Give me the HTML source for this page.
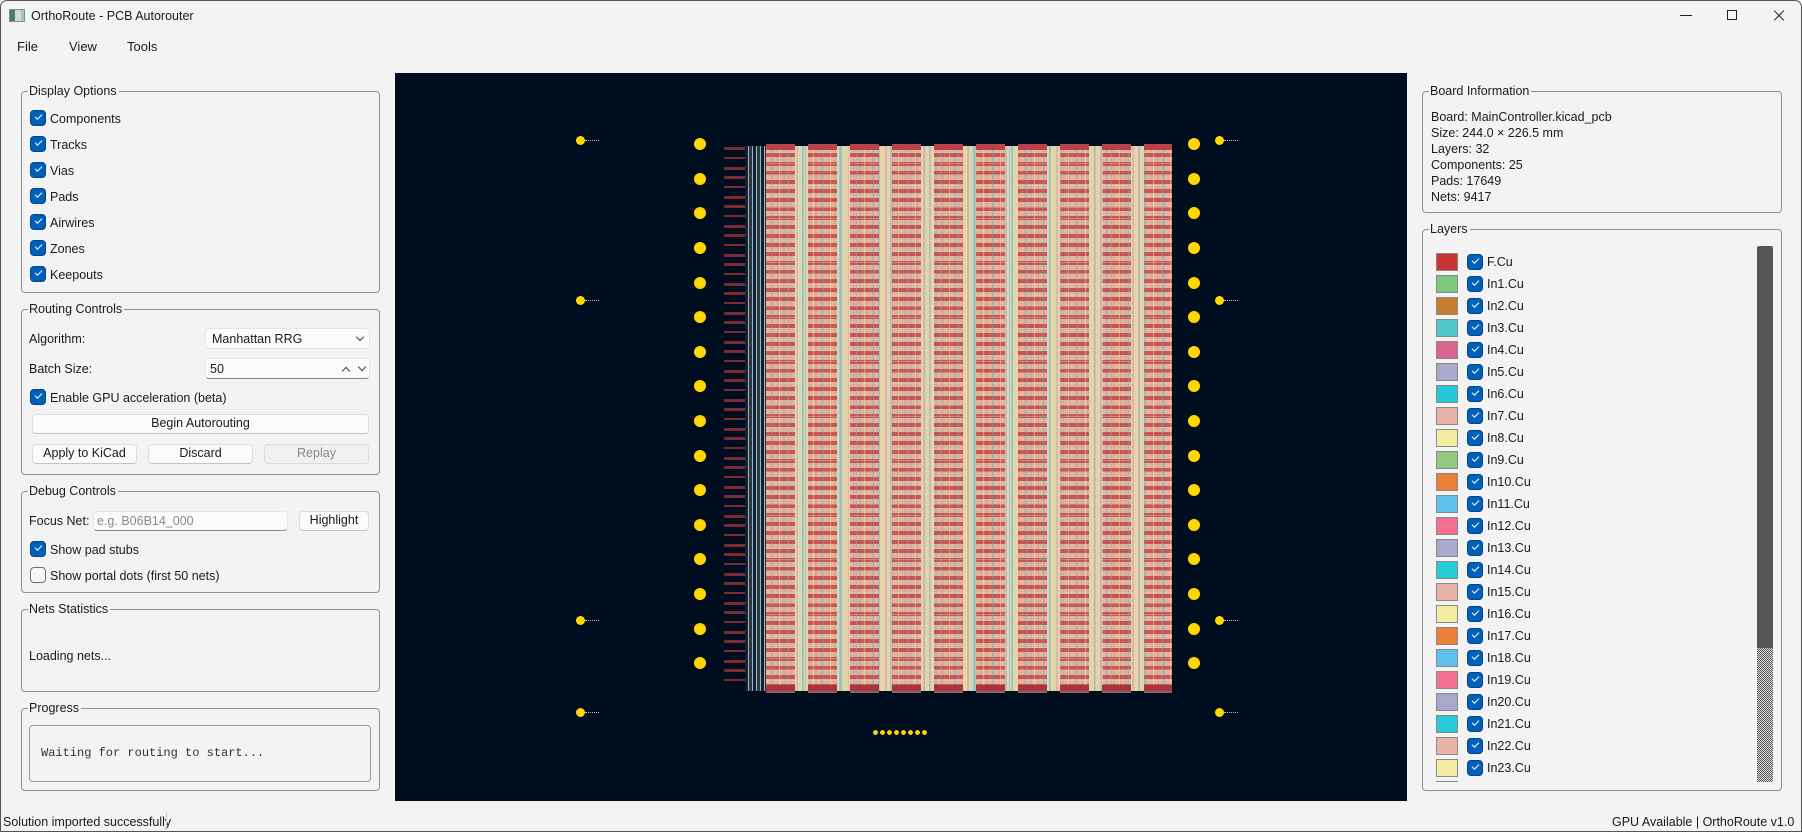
<!DOCTYPE html>
<html><head><meta charset="utf-8">
<style>
*{box-sizing:border-box;margin:0;padding:0}
body{width:1802px;height:832px;overflow:hidden;background:#f3f3f3;font-family:"Liberation Sans",sans-serif;font-size:12.5px;color:#1a1a1a;position:relative}
.a{position:absolute}
.win{position:absolute;left:0;top:0;width:1802px;height:832px;border:1px solid #555;border-radius:7px 7px 0 0}
.gb{position:absolute;border:1px solid #8f8f8f;border-radius:4px}
.gt{position:absolute;top:-9px;left:6px;background:#f3f3f3;padding:0 2px 0 1px;font-size:12.5px;line-height:16px}
.cb{position:absolute;width:16px;height:16px;border-radius:4px;background:#005fb8;border:1px solid #00468a}
.cb::after{content:"";position:absolute;left:4px;top:3px;width:6px;height:3px;border-left:1.2px solid #fff;border-bottom:1.2px solid #fff;transform:rotate(-45deg)}
.cbo{position:absolute;width:16px;height:16px;border-radius:4px;background:#f7f7f7;border:1px solid #6f6f6f}
.lbl{position:absolute;line-height:16px;white-space:nowrap}
.btn{position:absolute;background:#fbfbfb;border:1px solid #dcdcdc;border-bottom-color:#c4c4c4;border-radius:4px;text-align:center;line-height:17px}
.dot{position:absolute;border-radius:50%;background:#ffd700}
.sw{position:absolute;width:22px;height:18px;border:1px solid #8a8a8a}
</style></head><body>
<div class="win"></div>
<!-- title -->
<div class="a" style="left:9px;top:9px;width:16px;height:13px;border:1px solid #888;background:linear-gradient(90deg,#3d7e7a 0 5px,#d8d8d8 5px 11px,#9cb 11px)"></div>
<div class="lbl" style="left:31px;top:8px;font-size:12.5px">OrthoRoute - PCB Autorouter</div>
<div class="a" style="left:1680px;top:15px;width:12px;height:1px;background:#222"></div>
<div class="a" style="left:1727px;top:10px;width:10px;height:10px;border:1px solid #222"></div>
<div class="a" style="left:1772px;top:15px;width:14px;height:1px;background:#222;transform:rotate(45deg)"></div>
<div class="a" style="left:1772px;top:15px;width:14px;height:1px;background:#222;transform:rotate(-45deg)"></div>
<!-- menu -->
<div class="lbl" style="left:17px;top:39px;font-size:13px">File</div>
<div class="lbl" style="left:69px;top:39px;font-size:13px">View</div>
<div class="lbl" style="left:127px;top:39px;font-size:13px">Tools</div>

<!-- Display Options -->
<div class="gb" style="left:21px;top:91px;width:359px;height:202px"><div class="gt">Display Options</div></div>
<div class="cb" style="left:30px;top:110px"></div><div class="lbl" style="left:50px;top:111px">Components</div>
<div class="cb" style="left:30px;top:136px"></div><div class="lbl" style="left:50px;top:137px">Tracks</div>
<div class="cb" style="left:30px;top:162px"></div><div class="lbl" style="left:50px;top:163px">Vias</div>
<div class="cb" style="left:30px;top:188px"></div><div class="lbl" style="left:50px;top:189px">Pads</div>
<div class="cb" style="left:30px;top:214px"></div><div class="lbl" style="left:50px;top:215px">Airwires</div>
<div class="cb" style="left:30px;top:240px"></div><div class="lbl" style="left:50px;top:241px">Zones</div>
<div class="cb" style="left:30px;top:266px"></div><div class="lbl" style="left:50px;top:267px">Keepouts</div>

<!-- Routing Controls -->
<div class="gb" style="left:21px;top:309px;width:359px;height:166px"><div class="gt">Routing Controls</div></div>
<div class="lbl" style="left:29px;top:331px">Algorithm:</div>
<div class="a" style="left:205px;top:328px;width:165px;height:21px;background:#fbfbfb;border:1px solid #e5e5e5;border-radius:4px"></div>
<div class="lbl" style="left:212px;top:331px">Manhattan RRG</div>
<div class="a" style="left:357px;top:334px;width:6px;height:6px;border-right:1.2px solid #444;border-bottom:1.2px solid #444;transform:rotate(45deg)"></div>
<div class="lbl" style="left:29px;top:361px">Batch Size:</div>
<div class="a" style="left:205px;top:358px;width:165px;height:21px;background:#fbfbfb;border:1px solid #e5e5e5;border-bottom:1px solid #888;border-radius:4px"></div>
<div class="lbl" style="left:210px;top:361px">50</div>
<div class="a" style="left:343px;top:368px;width:6px;height:6px;border-left:1.2px solid #444;border-top:1.2px solid #444;transform:rotate(45deg)"></div>
<div class="a" style="left:359px;top:364px;width:6px;height:6px;border-right:1.2px solid #444;border-bottom:1.2px solid #444;transform:rotate(45deg)"></div>
<div class="cb" style="left:30px;top:389px"></div><div class="lbl" style="left:50px;top:390px">Enable GPU acceleration (beta)</div>
<div class="btn" style="left:32px;top:414px;width:337px;height:20px">Begin Autorouting</div>
<div class="btn" style="left:32px;top:444px;width:105px;height:20px">Apply to KiCad</div>
<div class="btn" style="left:148px;top:444px;width:105px;height:20px">Discard</div>
<div class="btn" style="left:264px;top:444px;width:105px;height:20px;background:#f0f0f0;color:#888;border-color:#dcdcdc">Replay</div>

<!-- Debug Controls -->
<div class="gb" style="left:21px;top:491px;width:359px;height:102px"><div class="gt">Debug Controls</div></div>
<div class="lbl" style="left:29px;top:513px">Focus Net:</div>
<div class="a" style="left:93px;top:511px;width:195px;height:20px;background:#fbfbfb;border:1px solid #e5e5e5;border-bottom:1px solid #888;border-radius:4px"></div>
<div class="lbl" style="left:97px;top:513px;color:#8a8a8a">e.g. B06B14_000</div>
<div class="btn" style="left:299px;top:511px;width:70px;height:20px">Highlight</div>
<div class="cb" style="left:30px;top:541px"></div><div class="lbl" style="left:50px;top:542px">Show pad stubs</div>
<div class="cbo" style="left:30px;top:567px"></div><div class="lbl" style="left:50px;top:568px">Show portal dots (first 50 nets)</div>

<!-- Nets Statistics -->
<div class="gb" style="left:21px;top:609px;width:359px;height:83px"><div class="gt">Nets Statistics</div></div>
<div class="lbl" style="left:29px;top:648px">Loading nets...</div>

<!-- Progress -->
<div class="gb" style="left:21px;top:708px;width:359px;height:83px"><div class="gt">Progress</div></div>
<div class="a" style="left:29px;top:725px;width:342px;height:57px;border:1px solid #9a9a9a;border-radius:4px;background:#f3f3f3"></div>
<div class="lbl" style="left:41px;top:745px;font-family:'Liberation Mono',monospace;font-size:12px;color:#333">Waiting for routing to start...</div>

<!-- status -->
<div class="lbl" style="left:3px;top:814px">Solution imported successfully</div>
<div class="a" style="left:166px;top:812px;width:1px;height:18px;background:#ccc"></div>
<div class="lbl" style="left:1612px;top:814px">GPU Available | OrthoRoute v1.0</div>

<!-- Canvas -->
<div class="a" style="left:395px;top:73px;width:1012px;height:728px;background:#000d1e;overflow:hidden">
  <!-- stubs left -->
  <div class="a" style="left:329px;top:74px;width:22px;height:542px;background:repeating-linear-gradient(180deg,#7a2a33 0 3px,transparent 3px 10px,#7a2a33 10px 12px,transparent 12px 20px,#7a2a33 20px 23px,transparent 23px 29px)"></div>
  <!-- board -->
  <div class="a" style="left:350px;top:73px;width:427px;height:545px;background:
    repeating-linear-gradient(90deg,rgba(90,190,220,.6) 0 2px,transparent 2px 7px,rgba(230,150,160,.5) 7px 9px,transparent 9px 13px,rgba(160,160,200,.5) 13px 15px,transparent 15px 19px),
    #e2d4a8"></div>
  <div class="a" style="left:350px;top:73px;width:21px;height:545px;background:repeating-linear-gradient(90deg,#0d2238 0 3px,rgba(200,160,120,.8) 3px 4px,#203a50 4px 7px,rgba(120,180,200,.8) 7px 8px)"></div>
  <!-- red columns -->
  <div class="a" style="left:371px;top:71px;width:406px;height:549px;background:
    repeating-linear-gradient(180deg,rgba(196,66,66,.85) 0 4px,rgba(222,160,150,.6) 4px 9px);-webkit-mask:repeating-linear-gradient(90deg,#000 0 29px,transparent 29px 42px);mask:repeating-linear-gradient(90deg,#000 0 29px,transparent 29px 42px)"></div>
  <!-- overlay traces / speckles -->
  <div class="a" style="left:371px;top:73px;width:406px;height:545px;background:
    repeating-linear-gradient(90deg,transparent 0 5px,rgba(90,185,220,.45) 5px 6px,transparent 6px 13px,rgba(240,225,170,.45) 13px 14px,transparent 14px 17px),
    repeating-linear-gradient(180deg,transparent 0 6px,rgba(230,215,190,.35) 6px 7px,transparent 7px 11px)"></div>
  <div class="a" style="left:371px;top:71px;width:406px;height:6px;background:repeating-linear-gradient(90deg,#b8434a 0 29px,transparent 29px 42px)"></div>
  <div class="a" style="left:371px;top:612px;width:406px;height:6px;background:repeating-linear-gradient(90deg,#a8343c 0 29px,transparent 29px 42px)"></div>
  <!-- yellow dot columns -->
  <div class="dot" style="left:299px;top:65px;width:12px;height:12px"></div>
  <div class="dot" style="left:299px;top:100px;width:12px;height:12px"></div>
  <div class="dot" style="left:299px;top:134px;width:12px;height:12px"></div>
  <div class="dot" style="left:299px;top:169px;width:12px;height:12px"></div>
  <div class="dot" style="left:299px;top:204px;width:12px;height:12px"></div>
  <div class="dot" style="left:299px;top:238px;width:12px;height:12px"></div>
  <div class="dot" style="left:299px;top:273px;width:12px;height:12px"></div>
  <div class="dot" style="left:299px;top:307px;width:12px;height:12px"></div>
  <div class="dot" style="left:299px;top:342px;width:12px;height:12px"></div>
  <div class="dot" style="left:299px;top:377px;width:12px;height:12px"></div>
  <div class="dot" style="left:299px;top:411px;width:12px;height:12px"></div>
  <div class="dot" style="left:299px;top:446px;width:12px;height:12px"></div>
  <div class="dot" style="left:299px;top:480px;width:12px;height:12px"></div>
  <div class="dot" style="left:299px;top:515px;width:12px;height:12px"></div>
  <div class="dot" style="left:299px;top:550px;width:12px;height:12px"></div>
  <div class="dot" style="left:299px;top:584px;width:12px;height:12px"></div>
  <div class="dot" style="left:793px;top:65px;width:12px;height:12px"></div>
  <div class="dot" style="left:793px;top:100px;width:12px;height:12px"></div>
  <div class="dot" style="left:793px;top:134px;width:12px;height:12px"></div>
  <div class="dot" style="left:793px;top:169px;width:12px;height:12px"></div>
  <div class="dot" style="left:793px;top:204px;width:12px;height:12px"></div>
  <div class="dot" style="left:793px;top:238px;width:12px;height:12px"></div>
  <div class="dot" style="left:793px;top:273px;width:12px;height:12px"></div>
  <div class="dot" style="left:793px;top:307px;width:12px;height:12px"></div>
  <div class="dot" style="left:793px;top:342px;width:12px;height:12px"></div>
  <div class="dot" style="left:793px;top:377px;width:12px;height:12px"></div>
  <div class="dot" style="left:793px;top:411px;width:12px;height:12px"></div>
  <div class="dot" style="left:793px;top:446px;width:12px;height:12px"></div>
  <div class="dot" style="left:793px;top:480px;width:12px;height:12px"></div>
  <div class="dot" style="left:793px;top:515px;width:12px;height:12px"></div>
  <div class="dot" style="left:793px;top:550px;width:12px;height:12px"></div>
  <div class="dot" style="left:793px;top:584px;width:12px;height:12px"></div>
  <!-- small dots -->
  <div class="dot" style="left:181px;top:63px;width:9px;height:9px"></div><div class="a" style="left:190px;top:67px;width:14px;height:1px;border-top:1px dotted #bbb"></div>
  <div class="dot" style="left:181px;top:223px;width:9px;height:9px"></div><div class="a" style="left:190px;top:227px;width:14px;height:1px;border-top:1px dotted #bbb"></div>
  <div class="dot" style="left:181px;top:543px;width:9px;height:9px"></div><div class="a" style="left:190px;top:547px;width:14px;height:1px;border-top:1px dotted #bbb"></div>
  <div class="dot" style="left:181px;top:635px;width:9px;height:9px"></div><div class="a" style="left:190px;top:639px;width:14px;height:1px;border-top:1px dotted #bbb"></div>
  <div class="dot" style="left:820px;top:63px;width:9px;height:9px"></div><div class="a" style="left:829px;top:67px;width:14px;height:1px;border-top:1px dotted #bbb"></div>
  <div class="dot" style="left:820px;top:223px;width:9px;height:9px"></div><div class="a" style="left:829px;top:227px;width:14px;height:1px;border-top:1px dotted #bbb"></div>
  <div class="dot" style="left:820px;top:543px;width:9px;height:9px"></div><div class="a" style="left:829px;top:547px;width:14px;height:1px;border-top:1px dotted #bbb"></div>
  <div class="dot" style="left:820px;top:635px;width:9px;height:9px"></div><div class="a" style="left:829px;top:639px;width:14px;height:1px;border-top:1px dotted #bbb"></div>
  <div class="a" style="left:477px;top:657px;width:56px;height:5px;background:radial-gradient(circle,#ffd700 2.2px,transparent 2.6px) 0 0/7px 5px repeat-x"></div>
</div>

<!-- Board Information -->
<div class="gb" style="left:1422px;top:91px;width:360px;height:122px"><div class="gt">Board Information</div></div>
<div class="lbl" style="left:1431px;top:109px;line-height:16px">Board: MainController.kicad_pcb<br>Size: 244.0 × 226.5 mm<br>Layers: 32<br>Components: 25<br>Pads: 17649<br>Nets: 9417</div>

<!-- Layers -->
<div class="gb" style="left:1422px;top:229px;width:360px;height:562px"><div class="gt">Layers</div></div>
<div class="a" style="left:1757px;top:246px;width:16px;height:536px;background:repeating-conic-gradient(#555 0 25%,#ddd 0 50%) 0 0/2px 2px"></div>
<div class="a" style="left:1757px;top:246px;width:16px;height:402px;background:#555;border-radius:3px 3px 0 0"></div>
<div class="a" style="left:1430px;top:251px;width:320px;height:531px;overflow:hidden">
<div style="position:relative">
<div class="sw" style="left:6px;top:2px;background:#c83434"></div><div class="cb" style="left:37px;top:3px"></div><div class="lbl" style="left:57px;top:3px">F.Cu</div>
<div class="sw" style="left:6px;top:24px;background:#80c880"></div><div class="cb" style="left:37px;top:25px"></div><div class="lbl" style="left:57px;top:25px">In1.Cu</div>
<div class="sw" style="left:6px;top:46px;background:#c87d32"></div><div class="cb" style="left:37px;top:47px"></div><div class="lbl" style="left:57px;top:47px">In2.Cu</div>
<div class="sw" style="left:6px;top:68px;background:#50c8c8"></div><div class="cb" style="left:37px;top:69px"></div><div class="lbl" style="left:57px;top:69px">In3.Cu</div>
<div class="sw" style="left:6px;top:90px;background:#dc6490"></div><div class="cb" style="left:37px;top:91px"></div><div class="lbl" style="left:57px;top:91px">In4.Cu</div>
<div class="sw" style="left:6px;top:112px;background:#a8a8c8"></div><div class="cb" style="left:37px;top:113px"></div><div class="lbl" style="left:57px;top:113px">In5.Cu</div>
<div class="sw" style="left:6px;top:134px;background:#28c8d8"></div><div class="cb" style="left:37px;top:135px"></div><div class="lbl" style="left:57px;top:135px">In6.Cu</div>
<div class="sw" style="left:6px;top:156px;background:#e8b4a8"></div><div class="cb" style="left:37px;top:157px"></div><div class="lbl" style="left:57px;top:157px">In7.Cu</div>
<div class="sw" style="left:6px;top:178px;background:#f4eca0"></div><div class="cb" style="left:37px;top:179px"></div><div class="lbl" style="left:57px;top:179px">In8.Cu</div>
<div class="sw" style="left:6px;top:200px;background:#90c880"></div><div class="cb" style="left:37px;top:201px"></div><div class="lbl" style="left:57px;top:201px">In9.Cu</div>
<div class="sw" style="left:6px;top:222px;background:#ec8038"></div><div class="cb" style="left:37px;top:223px"></div><div class="lbl" style="left:57px;top:223px">In10.Cu</div>
<div class="sw" style="left:6px;top:244px;background:#60c0ec"></div><div class="cb" style="left:37px;top:245px"></div><div class="lbl" style="left:57px;top:245px">In11.Cu</div>
<div class="sw" style="left:6px;top:266px;background:#f47090"></div><div class="cb" style="left:37px;top:267px"></div><div class="lbl" style="left:57px;top:267px">In12.Cu</div>
<div class="sw" style="left:6px;top:288px;background:#a8a8c8"></div><div class="cb" style="left:37px;top:289px"></div><div class="lbl" style="left:57px;top:289px">In13.Cu</div>
<div class="sw" style="left:6px;top:310px;background:#28ccd8"></div><div class="cb" style="left:37px;top:311px"></div><div class="lbl" style="left:57px;top:311px">In14.Cu</div>
<div class="sw" style="left:6px;top:332px;background:#e8b4a8"></div><div class="cb" style="left:37px;top:333px"></div><div class="lbl" style="left:57px;top:333px">In15.Cu</div>
<div class="sw" style="left:6px;top:354px;background:#f4eca0"></div><div class="cb" style="left:37px;top:355px"></div><div class="lbl" style="left:57px;top:355px">In16.Cu</div>
<div class="sw" style="left:6px;top:376px;background:#ec8038"></div><div class="cb" style="left:37px;top:377px"></div><div class="lbl" style="left:57px;top:377px">In17.Cu</div>
<div class="sw" style="left:6px;top:398px;background:#60c0ec"></div><div class="cb" style="left:37px;top:399px"></div><div class="lbl" style="left:57px;top:399px">In18.Cu</div>
<div class="sw" style="left:6px;top:420px;background:#f47090"></div><div class="cb" style="left:37px;top:421px"></div><div class="lbl" style="left:57px;top:421px">In19.Cu</div>
<div class="sw" style="left:6px;top:442px;background:#a8a8c8"></div><div class="cb" style="left:37px;top:443px"></div><div class="lbl" style="left:57px;top:443px">In20.Cu</div>
<div class="sw" style="left:6px;top:464px;background:#28ccd8"></div><div class="cb" style="left:37px;top:465px"></div><div class="lbl" style="left:57px;top:465px">In21.Cu</div>
<div class="sw" style="left:6px;top:486px;background:#e8b4a8"></div><div class="cb" style="left:37px;top:487px"></div><div class="lbl" style="left:57px;top:487px">In22.Cu</div>
<div class="sw" style="left:6px;top:508px;background:#f4eca0"></div><div class="cb" style="left:37px;top:509px"></div><div class="lbl" style="left:57px;top:509px">In23.Cu</div>
<div class="sw" style="left:6px;top:530px;background:#ec8038"></div><div class="cb" style="left:37px;top:531px"></div><div class="lbl" style="left:57px;top:531px">In24.Cu</div>
</div></div>
</body></html>
